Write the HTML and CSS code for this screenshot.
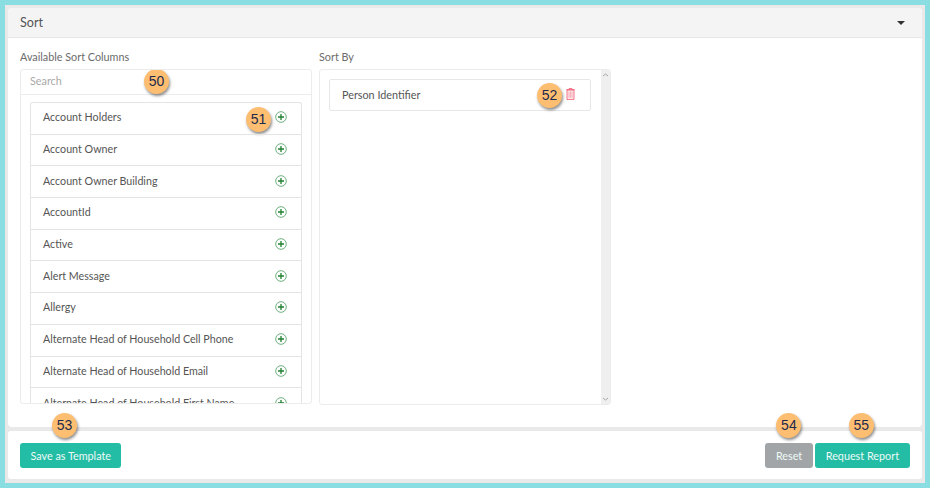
FILE: index.html
```html
<!DOCTYPE html>
<html>
<head>
  <meta name="viewport" content="width=device-width, initial-scale=1">
  <meta charset="UTF-8">
  <link rel="stylesheet" href="styles.css">
</head>
<body>
  <svg class="icon-defs" width="0" height="0">
    <symbol id="plus" viewBox="0 0 12 12">
      <circle cx="6" cy="6" r="5.3" fill="none" stroke="#5fa86f" stroke-width="0.9"/>
      <path d="M6 3v6M3 6h6" stroke="#1f7f2f" stroke-width="1.3"/>
    </symbol>
  </svg>
  <div class="container">
    <div class="panel">
      <div class="panel-heading">
        <span>Sort</span>
        <span class="caret"></span>
      </div>
      <div class="panel-body">
        <div class="column available">
          <div class="column-label">Available Sort Columns</div>
          <div class="list-box">
            <div class="search-row">Search<span class="badge badge-50">50</span></div>
            <div class="column-list">
              <div class="column-item">Account Holders<span class="badge badge-51">51</span><svg class="add-icon"><use href="#plus"/></svg></div>
              <div class="column-item">Account Owner<svg class="add-icon"><use href="#plus"/></svg></div>
              <div class="column-item">Account Owner Building<svg class="add-icon"><use href="#plus"/></svg></div>
              <div class="column-item">AccountId<svg class="add-icon"><use href="#plus"/></svg></div>
              <div class="column-item">Active<svg class="add-icon"><use href="#plus"/></svg></div>
              <div class="column-item">Alert Message<svg class="add-icon"><use href="#plus"/></svg></div>
              <div class="column-item">Allergy<svg class="add-icon"><use href="#plus"/></svg></div>
              <div class="column-item">Alternate Head of Household Cell Phone<svg class="add-icon"><use href="#plus"/></svg></div>
              <div class="column-item">Alternate Head of Household Email<svg class="add-icon"><use href="#plus"/></svg></div>
              <div class="column-item">Alternate Head of Household First Name<svg class="add-icon"><use href="#plus"/></svg></div>
            </div>
          </div>
        </div>
        <div class="column sort-by">
          <div class="column-label">Sort By</div>
          <div class="list-box sort-box">
            <div class="sort-list">
              <div class="sort-item">
                Person Identifier
                <span class="badge badge-52">52</span>
                <svg class="trash-icon" viewBox="0 0 9 12">
                  <path d="M3 1.4V.6h3v.8M.3 1.7h8.4M1 1.9h7v9.7H1z" fill="#fde8ea" stroke="#f0566f" stroke-width="0.8"/>
                  <path d="M3 3.6v6.2M4.5 3.6v6.2M6 3.6v6.2" stroke="#f59aa8" stroke-width="0.7"/>
                </svg>
              </div>
            </div>
            <div class="scrollbar">
              <svg viewBox="0 0 9 6"><path d="M2 4l2.5-2L7 4" fill="none" stroke="#a5a5a5"/></svg>
              <svg viewBox="0 0 9 6"><path d="M2 2l2.5 2L7 2" fill="none" stroke="#a5a5a5"/></svg>
            </div>
          </div>
        </div>
      </div>
    </div>
    <div class="footer">
      <button class="btn btn-teal">Save as Template<span class="badge badge-53">53</span></button>
      <div class="footer-right">
        <button class="btn btn-grey">Reset<span class="badge badge-54">54</span></button>
        <button class="btn btn-teal btn-request">Request Report<span class="badge badge-55">55</span></button>
      </div>
    </div>
  </div>
</body>
</html>
```
FILE: styles.css
```css
html, body {
  height: 100%;
  margin: 0;
  padding: 0;
}

body {
  font-family: "Lato", "Liberation Sans", sans-serif;
  font-size: 11px;
  color: #555;
}

.icon-defs {
  display: block;
  height: 0;
}

.container {
  box-sizing: border-box;
  height: 488px;
  border: 5px solid #8adde0;
  background-color: #e9e9e9;
  padding: 3px 3px 4px 3px;
  display: flex;
  flex-direction: column;
}

.panel {
  flex: 0 0 419px;
  background-color: #FFFFFF;
  border-radius: 4px;
  display: flex;
  flex-direction: column;
}

.panel-heading {
  flex: 0 0 30px;
  box-sizing: border-box;
  background-color: #f4f4f4;
  border-bottom: 1px solid #e7e7e7;
  border-radius: 4px 4px 0 0;
  padding: 0 17px 0 12px;
  display: flex;
  align-items: center;
  justify-content: space-between;
  font-size: 12.6px;
  color: #555;
}

.caret {
  width: 0;
  height: 0;
  border-left: 4px solid transparent;
  border-right: 4px solid transparent;
  border-top: 4px solid #333;
}

.panel-body {
  flex: 1;
  display: flex;
  gap: 7px;
  padding: 11px 12px 0 12px;
}

.column {
  width: 292px;
  display: flex;
  flex-direction: column;
}

.column-label {
  height: 20px;
  line-height: 15px;
  font-size: 10.8px;
  color: #6b6b6b;
}

.list-box {
  box-sizing: border-box;
  height: 335px;
  border: 1px solid #ececec;
  border-radius: 3px;
  overflow: hidden;
  position: relative;
}

.search-row {
  box-sizing: border-box;
  height: 25px;
  line-height: 22px;
  padding-left: 9px;
  border-bottom: 1px solid #ececec;
  font-size: 10.8px;
  color: #a9a9a9;
  position: relative;
}

.column-list {
  padding: 7px 9px 0 9px;
}

.column-item {
  box-sizing: border-box;
  height: 31.7px;
  padding: 0 14px 3px 12px;
  border: 1px solid #e4e4e4;
  border-bottom-width: 0;
  display: flex;
  align-items: center;
  justify-content: space-between;
  font-size: 10.7px;
  color: #555;
  white-space: nowrap;
  position: relative;
}

.column-item:first-child {
  border-radius: 3px 3px 0 0;
}

.add-icon {
  width: 12px;
  height: 12px;
  margin-top: 1px;
}

.sort-box {
  height: 336px;
  display: flex;
}

.sort-list {
  flex: 1;
  padding: 9px 10px 0 9px;
}

.sort-item {
  box-sizing: border-box;
  height: 32px;
  padding: 0 15px 2px 12px;
  border: 1px solid #e7e7e7;
  border-radius: 2px;
  display: flex;
  align-items: center;
  justify-content: space-between;
  font-size: 10.8px;
  position: relative;
}

.trash-icon {
  width: 9px;
  height: 12px;
}

.scrollbar {
  flex: 0 0 9px;
  background-color: #efefef;
  display: flex;
  flex-direction: column;
  justify-content: space-between;
  padding: 2px 0;
}

.scrollbar svg {
  display: block;
  width: 9px;
  height: 6px;
}

.footer {
  margin-top: 4px;
  flex: 1;
  background-color: #FFFFFF;
  border-radius: 3px;
  padding: 0 12px;
  display: flex;
  align-items: center;
  justify-content: space-between;
}

.footer-right {
  display: flex;
  gap: 2px;
}

.btn {
  height: 25px;
  padding: 0 9.5px;
  border: 1px solid transparent;
  border-radius: 3px;
  font-family: inherit;
  font-size: 10.8px;
  color: #eefaf7;
  position: relative;
}

.btn-request {
  padding: 0 10px;
}

.btn-teal {
  background-color: #23bda5;
}

.btn-grey {
  background-color: #a2a5a8;
}

.badge {
  position: absolute;
  width: 25px;
  height: 25px;
  line-height: 25px;
  border-radius: 50%;
  background-color: #fdbe71;
  box-shadow: 1px 2px 3px rgba(0, 0, 0, 0.45);
  font-family: "Liberation Sans", sans-serif;
  font-size: 14px;
  text-align: center;
  color: #1d2a4d;
}

.badge-50 { left: 123px; top: -1px; }
.badge-51 { left: 215px; top: 4px; }
.badge-52 { left: 207px; top: 3px; }
.badge-53 { left: 31px; top: -31px; }
.badge-54 { left: 10px; top: -31px; }
.badge-55 { left: 33px; top: -31px; }
```
